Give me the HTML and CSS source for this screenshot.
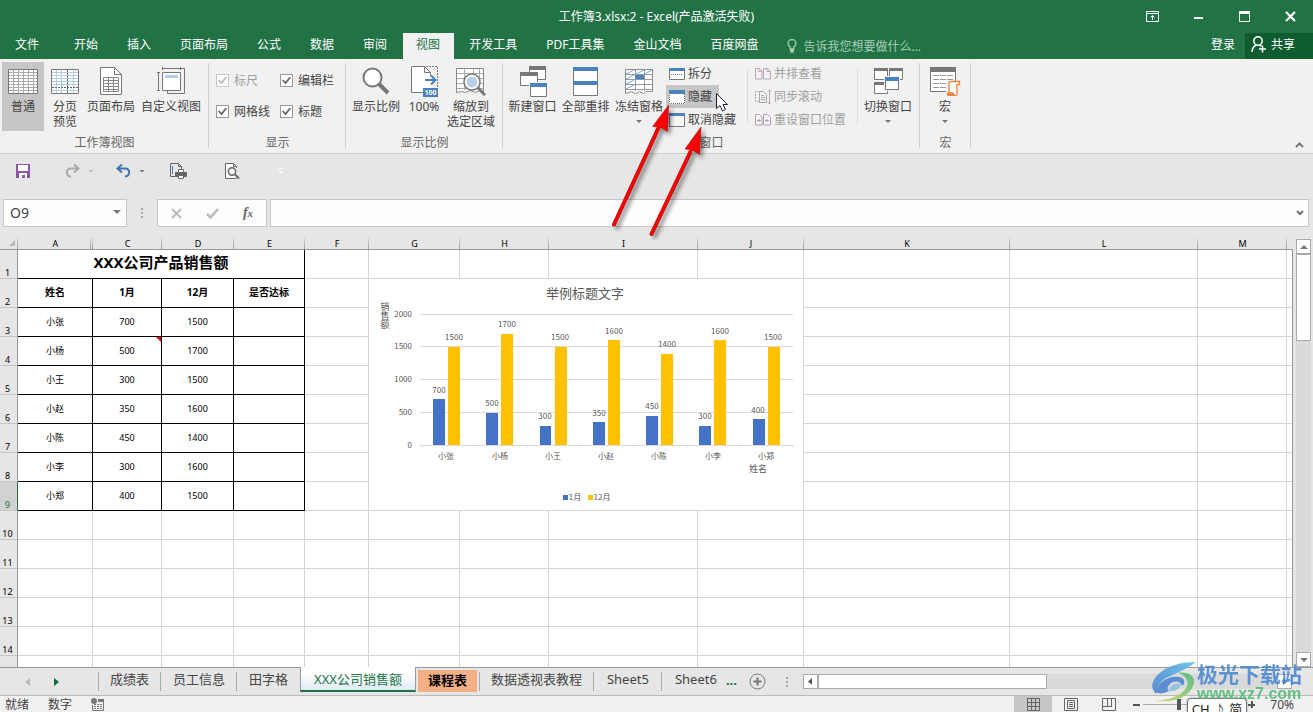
FILE: index.html
```html
<!DOCTYPE html>
<html lang="zh-CN">
<head>
<meta charset="utf-8">
<title>工作簿3.xlsx:2 - Excel</title>
<link rel="stylesheet" href="styles.css">
</head>
<body>
<header class="top">
  <div class="titlebar">
    <h1 class="title">工作簿3.xlsx:2 - Excel(产品激活失败)</h1>
    <div class="wincontrols">
      <button type="button" aria-label="功能区显示选项"><svg width="13" height="11" viewBox="0 0 13 11" fill="none" stroke="#fff"><path d="M.5.5h12v10H.5zM1 2.500h11M6.500 9V5M4.500 6.500l2-2 2 2"/></svg></button>
      <button type="button" aria-label="最小化"><svg width="11" height="11" viewBox="0 0 11 11"><path d="M1 6h9v2H1z" fill="#fff"/></svg></button>
      <button type="button" aria-label="最大化"><svg width="11" height="11" viewBox="0 0 11 11"><path d="M.5.5h10v10H.5z" fill="none" stroke="#fff"/><path d="M0 0h11v3H0z" fill="#fff"/></svg></button>
      <button type="button" aria-label="关闭"><svg width="11" height="11" viewBox="0 0 11 11" stroke="#fff" stroke-width="2.200"><path d="M1 1l9 9M10 1l-9 9"/></svg></button>
    </div>
  </div>
  <nav class="tabs">
    <button type="button" class="tab file">文件</button>
    <button type="button" class="tab">开始</button>
    <button type="button" class="tab">插入</button>
    <button type="button" class="tab">页面布局</button>
    <button type="button" class="tab">公式</button>
    <button type="button" class="tab">数据</button>
    <button type="button" class="tab">审阅</button>
    <button type="button" class="tab active">视图</button>
    <button type="button" class="tab">开发工具</button>
    <button type="button" class="tab">PDF工具集</button>
    <button type="button" class="tab">金山文档</button>
    <button type="button" class="tab">百度网盘</button>
    <button type="button" class="tellme"><svg width="10" height="14" viewBox="0 0 10 14" fill="none" stroke="#a9cdb8" stroke-width="1.300"><path d="M3.200 10V8.500C3 7.500 1 6.500 1 4.500a4 4 0 0 1 8 0c0 2-2 3-2.200 4V10zM3 11.500h4M3.500 13h3"/></svg>告诉我您想要做什么...</button>
    <button type="button" class="login">登录</button>
    <button type="button" class="share"><svg width="16" height="17" viewBox="0 0 16 17" fill="none" stroke="#fff" stroke-width="1.500"><circle cx="7" cy="5" r="4.200"/><path d="M1 16c0-4 2-6 4.500-7M8.500 9l2 1.500M8 13h7M11.500 9.500v7"/></svg>共享</button>
  </nav>
</header>

<section class="ribbon">
  <div class="group views">
    <div class="tools">
      <button type="button" class="big w42 on"><svg width="30" height="28" viewBox="0 0 30 28"><path d="M.5 2.500h29v24H.5z" fill="#fff" stroke="#777"/><path d="M1 5.500h28M1 8.500h28M1 11.500h28M1 14.500h28M1 17.500h28M1 20.500h28M1 23.500h28M5.500 3v23M10.500 3v23M15.500 3v23M20.500 3v23M25.500 3v23" stroke="#aaa"/></svg><span>普通</span></button>
      <button type="button" class="big w42"><svg width="28" height="28" viewBox="0 0 28 28"><path d="M.5 2.500h27v24H.5z" fill="#fff" stroke="#777"/><path d="M1 5.500h26M1 8.500h26M1 11.500h26M1 14.500h26M1 17.500h26M1 23.500h26M5.500 3v23M10.500 3v23M22.500 3v23" stroke="#b4cbe4"/><path d="M16.500 3v23M1 20.500h26" stroke="#666" stroke-dasharray="2 1"/></svg><span>分页<br>预览</span></button>
      <button type="button" class="big w50"><svg width="22" height="28" viewBox="0 0 22 28"><path d="M.5.500h14l7 7v20H.5z" fill="#fff" stroke="#777"/><path d="M14.500.500v7h7" fill="none" stroke="#777"/><path d="M3.500 10.500h15v14h-15zM4 13.500h14M4 16.500h14M4 19.500h14M4 22.500h14M8.500 11v13M13.500 11v13" fill="none" stroke="#888"/></svg><span>页面布局</span></button>
      <button type="button" class="big w70"><svg width="28" height="28" viewBox="0 0 28 28" fill="none" stroke="#777"><path d="M5.500 5.500h18v18h-18z" fill="#fff"/><path d="M5.500 0v3M23.500 0v3M5.500 1.500h18M0 5.500h3M0 23.500h3M1.500 5.500v18M24 1.500h3.500v25h-17V24"/><path d="M8 8h13v3H8z" fill="#b4cbe4" stroke="none"/></svg><span>自定义视图</span></button>
    </div>
    <h2>工作簿视图</h2>
  </div>
  <div class="group show">
    <div class="checks">
      <label class="off"><input type="checkbox" checked disabled>标尺</label>
      <label><input type="checkbox" checked>编辑栏</label>
      <label><input type="checkbox" checked>网格线</label>
      <label><input type="checkbox" checked>标题</label>
    </div>
    <h2>显示</h2>
  </div>
  <div class="group zoom">
    <div class="tools">
      <button type="button" class="big w54"><svg width="28" height="28" viewBox="0 0 28 28"><path d="M17 17l9 9" stroke="#777" stroke-width="4"/><circle cx="10.500" cy="10.500" r="9" fill="#fff" stroke="#777" stroke-width="2"/></svg><span>显示比例</span></button>
      <button type="button" class="big w42"><svg width="27" height="31" viewBox="0 0 27 31"><path d="M.5.500h14l6 6v20H.5z" fill="#fff"/><path d="M13 26.500H.5V.500h13l6 6V10M13.500.500v6h6" fill="none" stroke="#777"/><path d="M15 .500h11.500V22" fill="none" stroke="#777" stroke-dasharray="2 1"/><path d="M14 14h10M20 9.500l4.500 4.500-4.500 4.500" fill="none" stroke="#4a82bd" stroke-width="2"/><path d="M12 22h15v9H12z" fill="#4a7fb8"/><text x="19.500" y="29" text-anchor="middle" class="tiny">100</text></svg><span>100%</span></button>
      <button type="button" class="big w52"><svg width="30" height="30" viewBox="0 0 30 30"><path d="M.5 2.500h27v23l-4-1-4 2-5-2-5 2-4-1-5 1z" fill="#fff" stroke="#888"/><path d="M1 7.500h26M1 12.500h26M1 17.500h26M1 22.500h26M8.500 3v21M17.500 3v21M23.500 3v21" stroke="#aaa"/><path d="M22 22l7 7" stroke="#777" stroke-width="3"/><circle cx="16" cy="16" r="8" fill="#fff" stroke="#777" stroke-width="1.500"/><circle cx="16" cy="16" r="5.500" fill="#b9cfe8"/></svg><span>缩放到<br>选定区域</span></button>
    </div>
    <h2>显示比例</h2>
  </div>
  <div class="group window">
    <div class="tools">
      <button type="button" class="big w53"><svg width="28" height="31" viewBox="0 0 28 31"><path d="M10.500.500h16v13h-16z" fill="#fff" stroke="#777"/><path d="M10 0h17v4H10z" fill="#777"/><path d="M1.500 6.500h17v13h-17z" fill="#fff" stroke="#777"/><path d="M1 6h18v4H1z" fill="#777"/><path d="M10 16h18v15H10z" fill="#f1f1f1"/><path d="M11.500 17.500h16v13h-16z" fill="#fff" stroke="#777"/><path d="M11 17h17v4H11z" fill="#4a82bd"/></svg><span>新建窗口</span></button>
      <button type="button" class="big w53"><svg width="25" height="29" viewBox="0 0 25 29"><path d="M.5.500h24v28H.5z" fill="#fff" stroke="#777"/><path d="M0 0h25v4H0zM0 14h25v4H0z" fill="#4a82bd"/></svg><span>全部重排</span></button>
      <button type="button" class="big w54"><svg width="29" height="28" viewBox="0 0 29 28"><path d="M.5 2.500h27v22h-6l-3 2-4-2-4 2-4-2-6 2z" fill="#fff" stroke="#888"/><path d="M1 7.500h27M1 12.500h27M1 17.500h27M1 22.500h27M10.500 3v21M19.500 3v21" stroke="#999"/><path d="M1 7l8-4M1 12l8-4M11 7l8-4M20 7l7-4M1 17l8-4M1 22l8-4" stroke="#7da6d2"/><path d="M10 8h9v4h-9z" fill="#4a82bd"/></svg><span>冻结窗格</span><i class="caret"></i></button>
      <div class="stack">
        <button type="button" class="small"><svg width="16" height="14" viewBox="0 0 16 14"><path d="M.5 1.500h15v11H.5z" fill="#fff" stroke="#777"/><path d="M0 1h16v3H0z" fill="#4a82bd"/><path d="M2 7.500h12" stroke="#4a82bd" stroke-dasharray="1 1"/></svg>拆分</button>
        <button type="button" class="small on"><svg width="16" height="14" viewBox="0 0 16 14"><path d="M0 1h16v13H0z" fill="#fff"/><path d="M.5 3v10.500h15V3" fill="none" stroke="#666" stroke-dasharray="1 1"/><path d="M0 0h16v4H0z" fill="#4a82bd"/></svg>隐藏</button>
        <button type="button" class="small"><svg width="16" height="14" viewBox="0 0 16 14"><path d="M.5.500h15v13H.5z" fill="#f6f6f6" stroke="#777"/><path d="M0 0h16v3H0z" fill="#4a82bd"/></svg>取消隐藏</button>
      </div>
      <div class="stack side">
        <button type="button" class="small" disabled><svg width="16" height="12" viewBox="0 0 16 12" fill="#f7f0f7" stroke="#b5a9b5"><path d="M.5.500h4l2.500 2.500v8H.5zM4 .500v3h3M8.500.500h4l3 3v7.500h-7zM12 .500v3h3.500"/></svg>并排查看</button>
        <button type="button" class="small" disabled><svg width="16" height="16" viewBox="0 0 16 16" fill="none" stroke="#b0a8b0"><path d="M4 2.500H.5v10H4" stroke-dasharray="2 1"/><path d="M4.500 2.500h4l3 3v8h-7zM6 6.500h3M6 8.500h4M6 10.500h4M14.500 1v14M13 2.500L14.500 1 16 2.500M13 13.500l1.500 1.500 1.500-1.500"/></svg>同步滚动</button>
        <button type="button" class="small" disabled><svg width="16" height="12" viewBox="0 0 16 12" fill="#f7f0f7" stroke="#a9a2a9"><path d="M.5.500h4l2.500 2.500v8H.5zM8.500.500h4l3 3v7.500h-7zM2 6.500h4M4 5v3M10 6.500h4M12 5v3"/></svg>重设窗口位置</button>
      </div>
      <button type="button" class="big w60"><svg width="29" height="28" viewBox="0 0 29 28"><path d="M.5 1.500h13v11H.5zM15.500 1.500h13v11h-13zM.5 15.500h13v11H.5z" fill="#fff" stroke="#777"/><path d="M0 1h14v3H0zM15 1h14v3H15zM0 15h14v3H0z" fill="#777"/><path d="M10 9h16v15H10z" fill="#f1f1f1"/><path d="M11.500 10.500h13v12h-13z" fill="#fff" stroke="#777"/><path d="M11 10h14v4H11z" fill="#4a82bd"/></svg><span>切换窗口</span><i class="caret"></i></button>
    </div>
    <h2>窗口</h2>
  </div>
  <div class="group macro">
    <div class="tools">
      <button type="button" class="big w50"><svg width="31" height="31" viewBox="0 0 31 31"><path d="M.5 1.500h25v24H.5z" fill="#fff" stroke="#777"/><path d="M0 1h26v5H0z" fill="#777"/><path d="M3 9.500h20M3 13.500h20M3 17.500h14M3 21.500h14" stroke="#999" stroke-dasharray="6 1"/><path d="M16 15h15v16H16z" fill="#f1f1f1"/><path d="M19 26.500V17c0-1 1-1.500 2-1.500h8.500v3H27V28c0 1-1 1.500-2 1.500z" fill="#fff" stroke="#e8853a" stroke-width="1.300"/><path d="M17 26.500h7c0 2 0 3 1 3.500h-6.500c-1.500 0-2-1-1.500-3.500z" fill="#e8853a"/></svg><span>宏</span><i class="caret"></i></button>
    </div>
    <h2>宏</h2>
  </div>
  <button type="button" class="collapse" aria-label="折叠功能区"><svg width="9" height="6" viewBox="0 0 9 6" fill="none" stroke="#777" stroke-width="2"><path d="M1 5l3.500-3.500L8 5"/></svg></button>
</section>

<section class="qat">
  <button type="button" aria-label="保存" class="q36"><svg width="14" height="14" viewBox="0 0 14 14"><path d="M0 0h14v14H0z" fill="#8a55a8"/><path d="M2 1h10v6H2zM3 9h8v5H9v-3H6v3H3z" fill="#fff"/></svg></button>
  <button type="button" aria-label="恢复" class="q36 redo"><svg width="15" height="14" viewBox="0 0 15 14" fill="none" stroke="#aaa" stroke-width="2"><path d="M13 4.500H6C.5 4.500.5 12 6 12.500M9 .500l4.500 4-4.500 4"/></svg><i class="caret pale"></i></button>
  <button type="button" aria-label="撤消" class="q36 undo"><svg width="15" height="14" viewBox="0 0 15 14" fill="none" stroke="#3f75b0" stroke-width="2"><path d="M2 4.500h7c5.500 0 5.500 7.500 0 8M6 .500l-4.500 4 4.500 4"/></svg><i class="caret"></i></button>
  <button type="button" aria-label="快速打印" class="q36 print"><svg width="17" height="16" viewBox="0 0 17 16" fill="none" stroke="#666"><path d="M5 13.500H.5v-13h8l3 3V6M8.500.500v3h3"/><path d="M2.500 3v8" stroke="#4a82bd"/><path d="M5.500 9.500h11v4h-11z" fill="#666"/><path d="M8.500 6.500h5v3h-5zM8.500 12.500h5v3h-5z" fill="#fff"/></svg></button>
  <button type="button" aria-label="打印预览" class="q36 preview"><svg width="15" height="17" viewBox="0 0 15 17" fill="none" stroke="#666"><path d="M11.500 15.500H.5V.500h8l3 3V5M8.500.500v3h3" fill="#fff"/><circle cx="7" cy="8.500" r="3.700" fill="#eee" stroke-width="1.500"/><path d="M10 11.500l4 4" stroke-width="2"/></svg></button>
  <button type="button" aria-label="自定义快速访问工具栏" class="custom"><svg width="6" height="6" viewBox="0 0 6 6" fill="#f8f8f8"><path d="M0 0h6v1H0zM0 3h6L3 6z"/></svg></button>
</section>

<section class="formula">
  <div class="namebox"><input type="text" value="O9" aria-label="名称框"><button type="button" aria-label="名称列表"><svg width="8" height="4" viewBox="0 0 8 4"><path d="M0 0h8L4 4z" fill="#777"/></svg></button></div>
  <svg class="dots" width="2" height="12" viewBox="0 0 2 12" fill="#a8a8a8"><path d="M0 1h2v2H0zM0 5h2v2H0zM0 9h2v2H0z"/></svg>
  <div class="fxbox">
    <button type="button" aria-label="取消"><svg width="11" height="11" viewBox="0 0 11 11" stroke="#bbb" stroke-width="2"><path d="M1 1l9 9M10 1l-9 9"/></svg></button>
    <button type="button" aria-label="输入"><svg width="13" height="11" viewBox="0 0 13 11" fill="none" stroke="#bbb" stroke-width="2.500"><path d="M1 6l3.500 3.500L12 1"/></svg></button>
    <button type="button" class="fx" aria-label="插入函数">f<small>x</small></button>
  </div>
  <div class="input"><input type="text" aria-label="编辑栏"><button type="button" aria-label="展开编辑栏"><svg width="8" height="6" viewBox="0 0 8 6" fill="none" stroke="#777" stroke-width="2"><path d="M1 1l3 3 3-3"/></svg></button></div>
</section>

<main class="work">
  <div class="sheet">
    <table class="cells">
      <colgroup><col class="c0"><col class="cA"><col class="cC"><col class="cD"><col class="cE"><col class="cF"><col class="cG"><col class="cH"><col class="cI"><col class="cJ"><col class="cK"><col class="cL"><col class="cM"><col></colgroup>
      <thead>
        <tr><th class="corner"><svg width="6" height="6" viewBox="0 0 6 6"><path d="M6 0v6H0z" fill="#b8b8b8"/></svg></th><th class="hidden-next">A</th><th>C</th><th>D</th><th>E</th><th>F</th><th>G</th><th>H</th><th>I</th><th>J</th><th>K</th><th>L</th><th>M</th><th></th></tr>
      </thead>
      <tbody>
        <tr><th>1</th><td colspan="4" class="b caption">XXX公司产品销售额</td><td></td><td></td><td></td><td></td><td></td><td></td><td></td><td></td><td></td></tr>
        <tr class="head"><th>2</th><td class="b">姓名</td><td class="b">1月</td><td class="b">12月</td><td class="b">是否达标</td><td></td><td></td><td></td><td></td><td></td><td></td><td></td><td></td><td></td></tr>
        <tr><th>3</th><td class="b">小张</td><td class="b">700</td><td class="b">1500</td><td class="b"></td><td></td><td></td><td></td><td></td><td></td><td></td><td></td><td></td><td></td></tr>
        <tr><th>4</th><td class="b">小杨</td><td class="b note">500</td><td class="b">1700</td><td class="b"></td><td></td><td></td><td></td><td></td><td></td><td></td><td></td><td></td><td></td></tr>
        <tr><th>5</th><td class="b">小王</td><td class="b">300</td><td class="b">1500</td><td class="b"></td><td></td><td></td><td></td><td></td><td></td><td></td><td></td><td></td><td></td></tr>
        <tr><th>6</th><td class="b">小赵</td><td class="b">350</td><td class="b">1600</td><td class="b"></td><td></td><td></td><td></td><td></td><td></td><td></td><td></td><td></td><td></td></tr>
        <tr><th>7</th><td class="b">小陈</td><td class="b">450</td><td class="b">1400</td><td class="b"></td><td></td><td></td><td></td><td></td><td></td><td></td><td></td><td></td><td></td></tr>
        <tr><th>8</th><td class="b">小李</td><td class="b">300</td><td class="b">1600</td><td class="b"></td><td></td><td></td><td></td><td></td><td></td><td></td><td></td><td></td><td></td></tr>
        <tr><th class="current">9</th><td class="b">小郑</td><td class="b">400</td><td class="b">1500</td><td class="b"></td><td></td><td></td><td></td><td></td><td></td><td></td><td></td><td></td><td></td></tr>
        <tr><th>10</th><td></td><td></td><td></td><td></td><td></td><td></td><td></td><td></td><td></td><td></td><td></td><td></td><td></td></tr>
        <tr><th>11</th><td></td><td></td><td></td><td></td><td></td><td></td><td></td><td></td><td></td><td></td><td></td><td></td><td></td></tr>
        <tr><th>12</th><td></td><td></td><td></td><td></td><td></td><td></td><td></td><td></td><td></td><td></td><td></td><td></td><td></td></tr>
        <tr><th>13</th><td></td><td></td><td></td><td></td><td></td><td></td><td></td><td></td><td></td><td></td><td></td><td></td><td></td></tr>
        <tr><th>14</th><td></td><td></td><td></td><td></td><td></td><td></td><td></td><td></td><td></td><td></td><td></td><td></td><td></td></tr>
        <tr><th></th><td></td><td></td><td></td><td></td><td></td><td></td><td></td><td></td><td></td><td></td><td></td><td></td><td></td></tr>
      </tbody>
    </table>
    <svg class="chart" width="434" height="231" viewBox="0 0 434 231" role="img" aria-label="举例标题文字">
      <path d="M0 0h434v231H0z" fill="#fff"/>
      <path d="M51 35.500h373M51 67.500h373M51 100.500h373M51 133.500h373M51 166.500h373M51.500 166v2M105.500 166v2M158.500 166v2M211.500 166v2M264.500 166v2M318.500 166v2M371.500 166v2M423.500 166v2" stroke="#d9d9d9"/>
      <g fill="#4472c4"><path d="M64 120h12v46H64zM117 134h12v32h-12zM171 147h11v19h-11zM224 143h12v23h-12zM277 137h12v29h-12zM330 147h12v19h-12zM384 140h12v26h-12z"/><path d="M194 216h5v5h-5z"/></g>
      <g fill="#ffc000"><path d="M79 68h12v98H79zM132 55h12v111h-12zM186 68h12v98h-12zM239 61h12v105h-12zM292 75h12v91h-12zM345 61h12v105h-12zM399 68h12v98h-12z"/><path d="M219 216h5v5h-5z"/></g>
      <text class="ctitle" x="216" y="19">举例标题文字</text>
      <g class="atitle"><text class="vertical" x="16" y="37">销售额</text><text x="389" y="193">姓名</text></g>
      <g class="axis"><text x="43" y="38">2000</text><text x="43" y="70">1500</text><text x="43" y="103">1000</text><text x="43" y="136">500</text><text x="43" y="169">0</text></g>
      <g class="val"><text x="70" y="114">700</text><text x="85" y="61">1500</text><text x="123" y="127">500</text><text x="138" y="48">1700</text><text x="176" y="140">300</text><text x="191" y="61">1500</text><text x="230" y="137">350</text><text x="245" y="55">1600</text><text x="283" y="130">450</text><text x="298" y="68">1400</text><text x="336" y="140">300</text><text x="351" y="55">1600</text><text x="389" y="134">400</text><text x="404" y="61">1500</text></g>
      <g class="val"><text x="77" y="180">小张</text><text x="131" y="180">小杨</text><text x="184" y="180">小王</text><text x="237" y="180">小赵</text><text x="290" y="180">小陈</text><text x="344" y="180">小李</text><text x="397" y="180">小郑</text><text x="206" y="221">1月</text><text x="233" y="221">12月</text></g>
    </svg>
  </div>
  <div class="vscroll">
    <button type="button" aria-label="向上滚动"><svg width="8" height="4" viewBox="0 0 8 4"><path d="M0 4h8L4 0z" fill="#777"/></svg></button>
    <div class="vthumb"></div>
    <button type="button" class="end" aria-label="向下滚动"><svg width="8" height="4" viewBox="0 0 8 4"><path d="M0 0h8L4 4z" fill="#777"/></svg></button>
  </div>
</main>

<footer>
  <div class="sheetbar">
    <div class="arrows">
      <button type="button" aria-label="上一张"><svg width="5" height="8" viewBox="0 0 5 8"><path d="M5 0v8L0 4z" fill="#bbb"/></svg></button>
      <button type="button" aria-label="下一张"><svg width="5" height="8" viewBox="0 0 5 8"><path d="M0 0v8l5-4z" fill="#0f6b39"/></svg></button>
    </div>
    <button type="button" class="stab lead">成绩表</button>
    <button type="button" class="stab">员工信息</button>
    <button type="button" class="stab last">田字格</button>
    <button type="button" class="stab current">XXX公司销售额</button>
    <button type="button" class="stab orange">课程表</button>
    <button type="button" class="stab lead">数据透视表教程</button>
    <button type="button" class="stab latin">Sheet5</button>
    <button type="button" class="stab latin last">Sheet6</button>
    <button type="button" class="more">...</button>
    <button type="button" class="add" aria-label="新工作表"><svg width="17" height="17" viewBox="0 0 17 17" fill="none" stroke="#777"><circle cx="8.500" cy="8.500" r="7.500"/><path d="M4.500 8.500h8M8.500 4.500v8" stroke-width="2"/></svg></button>
    <svg class="dots" width="2" height="12" viewBox="0 0 2 12" fill="#a8a8a8"><path d="M0 1h2v2H0zM0 5h2v2H0zM0 9h2v2H0z"/></svg>
    <div class="hscroll">
      <button type="button" aria-label="向左滚动"><svg width="4" height="7" viewBox="0 0 4 7"><path d="M4 0v7L0 3.500z" fill="#555"/></svg></button>
      <div class="hthumb"></div>
      <button type="button" class="end" aria-label="向右滚动"><svg width="4" height="7" viewBox="0 0 4 7"><path d="M0 0v7l4-3.500z" fill="#555"/></svg></button>
    </div>
  </div>
  <div class="status">
    <span>就绪</span><span>数字</span>
    <svg width="13" height="13" viewBox="0 0 13 13"><circle cx="3" cy="3" r="3" fill="#777"/><path d="M7 1h6v3H7z" fill="#777"/><path d="M1.500 7v5.500h11V4" fill="none" stroke="#777"/><path d="M3 6.500h9M3 8.500h9M3 10.500h9" stroke="#777" stroke-dasharray="2 1"/></svg>
    <div class="viewbtns">
      <button type="button" class="on" aria-label="普通"><svg width="13" height="13" viewBox="0 0 13 13" fill="none" stroke="#666"><path d="M.5.500h12v12H.5zM4.500 0v13M8.500 0v13M0 4.500h13M0 8.500h13"/></svg></button>
      <button type="button" aria-label="页面布局"><svg width="14" height="13" viewBox="0 0 14 13" fill="none" stroke="#666"><path d="M.5.500h13v12H.5zM3.500 2.500h7v8h-7zM5 4.500h4M5 6.500h4M5 8.500h4"/></svg></button>
      <button type="button" aria-label="分页预览"><svg width="14" height="13" viewBox="0 0 14 13" fill="none" stroke="#666"><path d="M.5.500h13v12H.5zM5.500 0v8M9.500 0v8M0 8.500h10"/></svg></button>
    </div>
    <div class="zoomline">
      <button type="button" aria-label="缩小"><svg width="7" height="7" viewBox="0 0 7 7"><path d="M0 3h7v2H0z" fill="#555"/></svg></button>
      <input type="range" class="zoomer" min="0" max="100" value="34" aria-label="缩放">
      <button type="button" aria-label="放大"><svg width="7" height="7" viewBox="0 0 7 7"><path d="M0 3h7v2H0zM3 0h2v7H3z" fill="#555"/></svg></button>
    </div>
    <span class="pct">70%</span>
  </div>
</footer>

<div class="ime">CH ♪ 简</div>
<div class="mark">
  <svg width="46" height="42" viewBox="0 0 46 42">
    <defs><linearGradient id="sky" x1="0" y1="1" x2="1" y2="0"><stop offset="0" stop-color="#4d86cf"/><stop offset="1" stop-color="#62bde8"/></linearGradient><linearGradient id="leaf" x1="0" y1="1" x2="1" y2="0"><stop offset="0" stop-color="#c8d957"/><stop offset="1" stop-color="#4fb982"/></linearGradient></defs>
    <path d="M45 1C31 1 19 4 10 11 0 19-1 27 5 33c0-7 4-13 12-17C28 11 37 7 45 1z" fill="url(#sky)"/>
    <path d="M4 31c3-10 14-17 24-15 6 1 7 6 3 9-1-5-8-6-12-2-3 3-3 5-1 7-5 3-10 3-14 1z" fill="#4d86cf"/>
    <path d="M27 12c11-2 19 4 15 13-4 10-17 17-38 15 17-1 29-7 32-15 2-6-2-11-9-13z" fill="url(#leaf)"/>
    <path d="M17 30c7 1 12-2 13-7-5-2-11 1-13 7z" fill="#8cc0e0"/>
  </svg>
  <div class="marktext"><b>极光下载站</b><strong>www.xz7.com</strong></div>
</div>

<svg class="pointers" width="130" height="160" viewBox="0 0 130 160">
  <defs><filter id="shade" x="-20%" y="-20%" width="150%" height="150%"><feDropShadow dx="3" dy="3" stdDeviation="2" flood-color="#000" flood-opacity=".45"/></filter></defs>
  <g filter="url(#shade)">
    <path d="M14 144.500L58 49M51.500 154L90 73" stroke="#8b1a1a" stroke-width="4" stroke-linecap="round"/>
    <path d="M68.700 25l-16 21.500 6 .5 4 1.500 4.600 3zM101 47L85 69l6 .5 4 2 4.500 3z" fill="#f00" stroke="#8b1a1a" stroke-width=".6"/>
    <path d="M14 144.500L60 45M51.500 154L92 68" stroke="#f00" stroke-width="3" stroke-linecap="round"/>
  </g>
  <path d="M116.500 13.500v15l3.500-3 2.500 5.500 3-1.500-2.500-5h4.500z" fill="#fff" stroke="#223"/>
</svg>
</body>
</html>
```
FILE: styles.css
```css
* { box-sizing: border-box; }
body {
  margin: 0;
  position: relative;
  display: flex;
  flex-direction: column;
  height: 100vh;
  overflow: hidden;
  background: #e6e6e6;
  color: #444;
  font: 12px/15px "Noto Sans", "Noto Sans CJK SC", sans-serif;
}
button, input { font: inherit; color: inherit; border: 0; padding: 0; margin: 0; background: none; }
button { white-space: nowrap; }
svg { display: block; flex: none; }
h1, h2 { margin: 0; font: inherit; }

.top { background: #217346; color: #fff; }
.titlebar { display: grid; grid-template-columns: 1fr auto 1fr; align-items: center; height: 33px; }
.title { grid-column: 2; }
.wincontrols { display: flex; justify-content: flex-end; }
.wincontrols button { width: 46px; height: 30px; display: grid; place-items: center; }
.tabs { display: flex; gap: 2px; height: 26px; }
.tab { padding: 0 14px 3px 13px; }
.tab.file { padding: 0 18px 3px 15px; margin-right: 2px; }
.tab.active { background: #f1f1f1; color: #217346; }
.tellme { display: flex; align-items: center; gap: 6px; margin-left: 13px; color: #a9cdb8; }
.login { margin-left: auto; padding: 0 8px 3px; }
.share { display: flex; align-items: center; gap: 4px; width: 68px; padding: 0 6px 3px; background: #0e5c2f; }

.ribbon { display: flex; padding: 3px 0 2px; background: #f1f1f1; border-bottom: 1px solid #d2d2d2; }
.group { display: flex; flex-direction: column; position: relative; flex: none; }
.group::after { content: ""; position: absolute; right: 0; top: 1px; bottom: 3px; width: 1px; background: #d2d2d2; }
.group h2 { text-align: center; color: #666; padding: 4px 0 1px; height: 20px; }
.tools { display: flex; height: 69px; }
.views { width: 209px; } .views .tools { padding-left: 2px; }
.show { width: 137px; }
.zoom { width: 157px; } .zoom .tools { padding-left: 3px; }
.window { width: 417px; } .window .tools { padding-left: 3px; }
.macro { width: 51px; }
.big { display: grid; grid-template-rows: 34px auto 1fr; justify-items: center; align-items: center; flex: none; }
.big span { line-height: 15px; padding-top: 3px; }
.big svg { margin-top: 4px; }
.big .caret { align-self: start; margin-top: 6px; }
.on { background: #c6c6c6; }
.w42 { width: 42px; } .w50 { width: 50px; } .w52 { width: 52px; } .w53 { width: 53px; }
.w54 { width: 54px; } .w60 { width: 60px; } .w70 { width: 70px; }
.caret { width: 6px; height: 3px; background: #777; clip-path: polygon(0 0, 100% 0, 50% 100%); }
.caret.pale { background: #bbb; }
.tiny { font: bold 7px "Noto Sans", sans-serif; fill: #fff; }
.stack { display: flex; flex-direction: column; align-items: flex-start; width: 81px; }
.small { display: flex; align-items: center; gap: 3px; height: 23px; padding: 0 7px 0 3px; flex: none; }
.small:disabled { color: #a0a0a0; }
.stack.side { width: 111px; padding-left: 5px; position: relative; }
.stack.side::before, .stack.side::after { content: ""; position: absolute; top: 7px; bottom: 7px; width: 1px; background: #dcdcdc; }
.stack.side::before { left: 0; }
.stack.side::after { right: 0; }
.checks { display: grid; grid-template-columns: 64px 1fr; grid-auto-rows: 31px; height: 69px; padding: 3px 0 0 7px; }
.checks label { display: flex; align-items: center; gap: 5px; }
.checks .off { color: #a0a0a0; }
.checks input { appearance: none; width: 13px; height: 13px; border: 1px solid #999; background: #fff; display: grid; place-items: center; }
.checks input::before { content: ""; width: 9px; height: 8px; background: #666; clip-path: polygon(0 50%, 15% 38%, 38% 66%, 86% 0, 100% 12%, 40% 100%); }
.checks input:disabled { border-color: #c8c8c8; }
.checks input:disabled::before { background: #bbb; }
.collapse { margin: auto 9px 3px auto; }

.qat { display: flex; align-items: center; height: 34px; padding-left: 5px; }
.qat button { display: flex; align-items: center; justify-content: center; gap: 8px; }
.q36 { width: 36px; height: 24px; }
.qat .redo { margin-left: 20px; width: 37px; }
.qat .undo { margin-left: 14px; width: 37px; }
.qat .print { margin-left: 11px; }
.qat .preview { margin-left: 18px; }
.qat .custom { margin-left: 28px; }

.formula { display: flex; align-items: center; padding: 11px 4px 10px 3px; }
.namebox, .fxbox, .input { display: flex; align-items: center; height: 28px; background: #fdfdfd; border: 1px solid #c6c6c6; }
.namebox { width: 124px; padding: 0 5px 2px 6px; }
.namebox input { flex: 1; min-width: 0; font-size: 14px; }
.formula .dots { margin: 0 14px; }
.fxbox { width: 110px; margin-right: 3px; }
.fxbox button { flex: 1; display: grid; place-items: center; }
.fxbox .fx { display: flex; justify-content: center; align-items: baseline; font: italic bold 14px/18px "Liberation Serif", serif; color: #666; }
.fx small { font-size: 11px; }
.input { flex: 1; padding: 0 4px 0 6px; }
.input input { flex: 1; min-width: 0; }

.work { flex: 1; min-height: 0; display: flex; }
.sheet { flex: 1; min-width: 0; position: relative; overflow: hidden; }
.sheet::after { content: ""; position: absolute; right: 0; top: 12px; bottom: 0; width: 1px; background: #999; }
.cells { width: 100%; table-layout: fixed; border-spacing: 0; font-size: 9px; line-height: 11px; color: #000; }
.c0 { width: 18px; } .cA { width: 75px; } .cC { width: 69px; } .cD { width: 72px; } .cE { width: 71px; }
.cF { width: 64px; } .cG { width: 91px; } .cH { width: 89px; } .cI { width: 149px; } .cJ { width: 106px; }
.cK { width: 206px; } .cL { width: 188px; } .cM { width: 89px; }
.cells th, .cells td { padding: 0; }
.cells th { font-weight: normal; color: #000; }
.cells thead th { height: 13px; border-bottom: 1px solid #999; background: linear-gradient(#e0e0e0, #999) right / 1px 100% no-repeat; position: relative; }
.cells thead th:last-child { background: none; }
.cells .hidden-next::after { content: ""; position: absolute; right: 2px; top: 0; bottom: 0; width: 1px; background: linear-gradient(#e0e0e0, #999); }
.cells .corner svg { margin: 0 3px 0 auto; }
.cells tbody th { height: 29px; padding-right: 2px; vertical-align: bottom; border-right: 1px solid #999; border-bottom: 1px solid #c6c6c6; }
.cells tbody .current { background: #d2d2d2; border-right-color: #217346; color: #217346; }
.cells td { height: 29px; padding-bottom: 2px; background: #fff; border-right: 1px solid #d4d4d4; border-bottom: 1px solid #d4d4d4; text-align: center; }
.cells .b { border-color: #000; }
.cells .caption { font-size: 15px; font-weight: bold; line-height: 20px; padding-bottom: 5px; }
.cells .head .b { font-size: 10px; font-weight: bold; }
.cells .note { position: relative; }
.note::after { content: ""; position: absolute; right: 0; top: 0; width: 5px; height: 5px; background: #e00; clip-path: polygon(0 0, 100% 0, 100% 100%); }

.chart { position: absolute; left: 369px; top: 42px; font: 8px "Noto Sans CJK SC", sans-serif; fill: #595959; }
.chart text { text-anchor: middle; }
.chart .ctitle { font-size: 13px; }
.chart .atitle { font-size: 9px; }
.chart .vertical { writing-mode: vertical-rl; }
.chart .axis text { text-anchor: end; }

.vscroll { display: flex; flex-direction: column; width: 15px; margin: 2px 2px 0 3px; background: #dadada; }
.vscroll button, .hscroll button { display: grid; place-items: center; width: 15px; height: 15px; background: #fff; border: 1px solid #ababab; flex: none; }
.vthumb { height: 87px; background: #fff; border: 1px solid #ababab; }
.vscroll .end { margin-top: auto; }

.sheetbar { display: flex; align-items: stretch; height: 29px; border-top: 1px solid #999; border-bottom: 1px solid #bbb; font-size: 13px; line-height: 16px; }
.arrows { display: flex; align-items: center; gap: 24px; width: 98px; padding-left: 25px; }
.stab { position: relative; padding: 0 12px 6px; }
.stab::after { content: ""; position: absolute; right: 0; top: 4px; bottom: 4px; width: 1px; background: #ababab; }
.stab.lead::before { content: ""; position: absolute; left: 0; top: 4px; bottom: 4px; width: 1px; background: #ababab; }
.stab.latin { padding: 0 13px 6px; }
.stab.last::after, .stab.current::after, .stab.orange::after { display: none; }
.stab.current { padding: 0 13px; margin-bottom: 3px; border-bottom: 2px solid #217346; border-right: 1px solid #999; border-left: 1px solid #999; background: linear-gradient(#fff 30%, #deeaf5); color: #217346; margin-top: -1px; }
.stab.orange { margin: 2px 2px 3px 2px; padding: 0 10px 3px; background: #f4b084; color: #000; font-weight: bold; }
.more { color: #0f6b39; font-weight: bold; margin: 0 12px 0 -4px; padding-bottom: 4px; }
.add { display: grid; place-items: center; }
.sheetbar .dots { align-self: center; margin: 0 15px 0 20px; }
.hscroll { display: flex; align-self: center; flex: 1; margin-right: 21px; background: #dadada; }
.hthumb { width: 229px; border: 1px solid #ababab; background: #fff; }
.hscroll .end { margin-left: auto; }

.status { display: flex; align-items: center; height: 16px; padding: 0 19px 0 5px; background: #f1f1f1; gap: 19px; }
.viewbtns { display: flex; margin-left: auto; margin-right: -14px; }
.viewbtns button { width: 38px; height: 16px; display: grid; place-items: center; }
.zoomline { display: flex; align-items: center; gap: 3px; }
.zoomer { appearance: none; width: 102px; height: 12px; background: linear-gradient(#aaa, #aaa) center / 100% 1px no-repeat; }
.zoomer::-webkit-slider-thumb { appearance: none; width: 4px; height: 11px; background: #555; }
.pct { margin-left: -4px; }

.ime { position: absolute; right: 66px; bottom: -8px; width: 60px; height: 22px; padding-top: 3px; border: 1px solid #777; border-radius: 4px; background: #fff; color: #222; text-align: center; box-shadow: 0 0 2px #888; font-size: 13px; }
.mark { position: absolute; right: 11px; bottom: 9px; display: flex; align-items: flex-end; opacity: .9; pointer-events: none; }
.marktext { display: flex; flex-direction: column; width: 105px; white-space: nowrap; }
.marktext b { font: bold 21px/24px "Noto Sans CJK SC", sans-serif; color: #4d8ad0; }
.marktext strong { font: bold 16px/18px "Liberation Sans", sans-serif; color: #55bd78; }
.pointers { position: absolute; left: 600px; top: 80px; pointer-events: none; }
```
